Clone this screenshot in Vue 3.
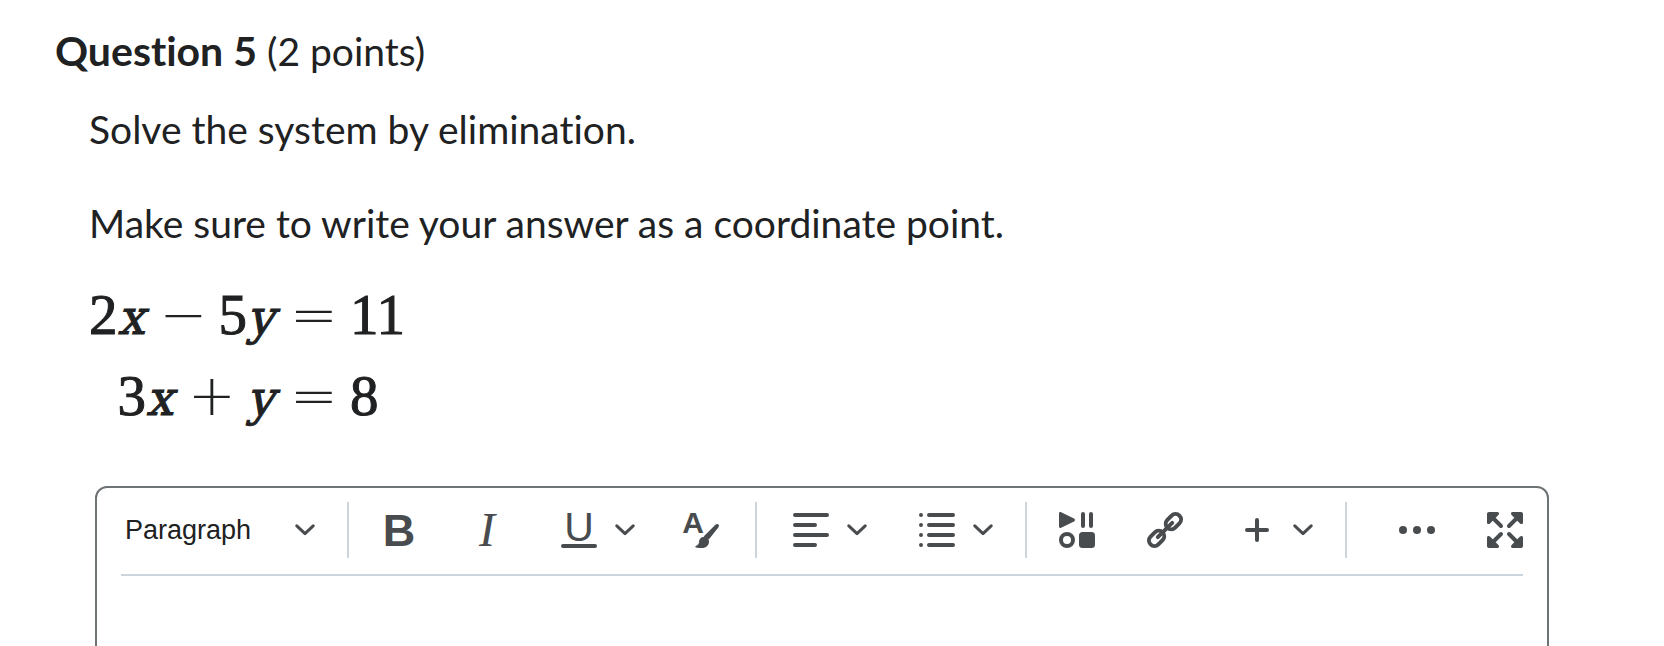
<script setup>
import { ref } from 'vue'

const format = ref('Paragraph')
const answer = ref('')

// right column of each row lines up on the equals sign
const equations = [
  { left: [['2', 'x'], ['−'], ['5', 'y']], right: '11' },
  { left: [['3', 'x'], ['+'], ['', 'y']], right: '8' }
]

const corners = [0, 90, 180, 270]
</script>

<template>
  <main class="page">
    <h2 class="title"><strong>Question 5</strong> (2 points)</h2>

    <section class="question">
      <p>Solve the system by elimination.</p>
      <p>Make sure to write your answer as a coordinate point.</p>

      <div class="system">
        <template v-for="(eq, i) in equations" :key="i">
          <div class="side">
            <span v-for="(term, j) in eq.left" :key="j" :class="term.length === 1 ? 'operator' : 'term'">{{ term[0] }}<i v-if="term[1]">{{ term[1] }}</i></span>
          </div>
          <span class="operator">=</span>
          <span class="term">{{ eq.right }}</span>
        </template>
      </div>
    </section>

    <section class="editor">
      <div class="toolbar" role="toolbar" aria-label="Formatting">
        <div class="format">
          <select v-model="format" aria-label="Format">
            <option>Paragraph</option>
            <option>Heading 1</option>
            <option>Heading 2</option>
          </select>
          <svg class="chevron" viewBox="0 0 20 12"><path d="M1.8 1.8L10 9.6L18.2 1.8" /></svg>
        </div>

        <div class="divider"></div>

        <div class="group">
          <button type="button" aria-label="Bold">
            <svg class="icon" viewBox="0 0 36 36"><text class="bold" x="18" y="34">B</text></svg>
          </button>
          <button type="button" aria-label="Italic">
            <svg class="icon" viewBox="0 0 36 36"><text class="italic" x="18" y="34">I</text></svg>
          </button>
          <button type="button" class="split" aria-label="Underline">
            <svg class="icon" viewBox="0 0 36 36">
              <text class="underline" x="18" y="29">U</text>
              <path class="line" d="M2 34H34" />
            </svg>
            <svg class="chevron" viewBox="0 0 20 12"><path d="M1.8 1.8L10 9.6L18.2 1.8" /></svg>
          </button>
          <button type="button" aria-label="Text color">
            <svg class="icon" viewBox="0 0 36 36">
              <text class="small" x="10" y="21">A</text>
              <path d="M32.4 12.7C33.4 11.8 34.8 11.8 35.5 12.6C36.2 13.4 36.1 14.4 35.5 15.3L25.8 27.6L20.6 24.6Z" />
              <path d="M16 30C16 27 18 25 20.6 25C23.6 25 26 27 26 29.5C26 33.4 23 36 19 36C16 36 12.8 36 12.3 34.8C12 33.6 16 33.4 16 30Z" />
            </svg>
          </button>
        </div>

        <div class="divider"></div>

        <div class="group">
          <button type="button" class="split" aria-label="Alignment">
            <svg class="icon" viewBox="0 0 36 36"><path class="line" d="M2 3H34M2 13H22M2 23H34M2 33H22" /></svg>
            <svg class="chevron" viewBox="0 0 20 12"><path d="M1.8 1.8L10 9.6L18.2 1.8" /></svg>
          </button>
          <button type="button" class="split" aria-label="List">
            <svg class="icon" viewBox="0 0 36 36"><path class="line" d="M2 3h0M2 13h0M2 23h0M2 33h0M10 3H34M10 13H34M10 23H34M10 33H34" /></svg>
            <svg class="chevron" viewBox="0 0 20 12"><path d="M1.8 1.8L10 9.6L18.2 1.8" /></svg>
          </button>
        </div>

        <div class="divider"></div>

        <div class="group">
          <button type="button" aria-label="Insert stuff">
            <svg class="icon" viewBox="0 0 36 36">
              <path d="M0 1.5C0 .3 1 -.3 2.2 .3L15 6.6C16.4 7.4 16.4 8.6 15 9.4L2.2 15.7C1 16.3 0 15.7 0 14.5Z" />
              <path class="line" d="M24 2V14M32 2V14" />
              <circle class="line" cx="8" cy="28" r="6" />
              <rect x="20" y="20" width="16" height="16" rx="3.5" />
            </svg>
          </button>
          <button type="button" aria-label="Insert link">
            <svg class="icon" viewBox="0 0 36 36">
              <rect class="line" x="17.9" y="4.1" width="17" height="11" rx="5.5" transform="rotate(-45 26.4 9.6)" />
              <rect class="line" x="1.1" y="20.9" width="17" height="11" rx="5.5" transform="rotate(-45 9.6 26.4)" />
              <path class="line" d="M25.2 10.8L10.8 25.2" />
            </svg>
          </button>
          <button type="button" class="split" aria-label="Other insert options">
            <svg class="icon" viewBox="0 0 36 36"><path class="line" d="M18 8V28M8 18H28" /></svg>
            <svg class="chevron" viewBox="0 0 20 12"><path d="M1.8 1.8L10 9.6L18.2 1.8" /></svg>
          </button>
        </div>

        <div class="divider"></div>

        <div class="group last">
          <button type="button" aria-label="More actions">
            <svg class="icon" viewBox="0 0 36 36">
              <circle cx="4" cy="18" r="4" />
              <circle cx="18" cy="18" r="4" />
              <circle cx="32" cy="18" r="4" />
            </svg>
          </button>
          <button type="button" class="fullscreen" aria-label="Full screen">
            <svg class="icon" viewBox="0 0 36 36">
              <g v-for="angle in corners" :key="angle" :transform="`rotate(${angle} 18 18)`">
                <path d="M2 0H10.4C12 0 12.6 1.6 11.4 3L3 11.4C1.6 12.6 0 12 0 10.4V2C0 .8 .8 0 2 0Z" />
                <path class="line" d="M6 6L14 14" />
              </g>
            </svg>
          </button>
        </div>
      </div>

      <textarea v-model="answer" aria-label="Answer"></textarea>
    </section>
  </main>
</template>

<style>
body {
  margin: 0;
  background: #fff;
}
</style>

<style scoped>
.page {
  box-sizing: border-box;
  height: 100vh;
  overflow: hidden;
  padding: 27px 115px 0 55px;
  color: #202122;
  font-family: Lato, "Liberation Sans", sans-serif;
  font-size: 39px;
  font-variant-ligatures: none;
}

.title {
  margin: 0 0 26px;
  font-size: 39px;
  font-weight: 400;
  line-height: 48px;
}

.title strong {
  font-size: 41px;
}

.question {
  padding-left: 34px;
}

.question p {
  margin: 0 0 38px;
  line-height: 56px;
}

.question p:last-of-type {
  margin-bottom: 23px;
}

.system {
  display: grid;
  grid-template-columns: max-content max-content max-content;
  grid-auto-rows: 81px;
  align-items: baseline;
  column-gap: 16px;
  font-family: "Liberation Serif", serif;
  font-size: 57px;
  line-height: 81px;
}

.side {
  display: flex;
  align-items: baseline;
  justify-content: flex-end;
  gap: 15px;
}

.term {
  -webkit-text-stroke: 1px #202122;
}

.term i {
  font-family: "DejaVu Math TeX Gyre", "Liberation Serif", serif;
  font-size: 48px;
  line-height: 1;
}

.operator {
  width: 44px;
  font-family: "DejaVu Sans Light", "DejaVu Sans", sans-serif;
  font-size: 57px;
  font-weight: 200;
  text-align: center;
}

.editor {
  box-sizing: border-box;
  margin: 50px 0 0 40px;
  padding: 0 24px;
  border: 2px solid #6e7376;
  border-radius: 12px;
}

.toolbar {
  display: flex;
  align-items: center;
  padding: 14px 0 16px;
  border-bottom: 2px solid #cdd5dc;
}

.format {
  display: grid;
  align-items: center;
  width: 214px;
  margin-right: 12px;
}

.format select,
.format svg {
  grid-area: 1 / 1;
}

.format svg {
  justify-self: end;
  margin-right: 20px;
  pointer-events: none;
}

.format select {
  appearance: none;
  width: 100%;
  height: 56px;
  padding: 0 4px;
  border: 0;
  background: transparent;
  color: #202122;
  font-family: "Liberation Sans", Arial, sans-serif;
  font-size: 27px;
}

.divider {
  width: 2px;
  height: 56px;
  background: #cdd5dc;
}

.group {
  display: flex;
  gap: 4px;
  margin: 0 12px 0 8px;
}

.group.last {
  margin: 0 0 0 auto;
}

button {
  display: flex;
  align-items: center;
  justify-content: center;
  width: 84px;
  height: 56px;
  padding: 0;
  border: 0;
  border-radius: 8px;
  background: transparent;
  cursor: pointer;
}

button:hover {
  background: #e3e9f1;
}

button.split {
  justify-content: flex-start;
  gap: 18px;
  width: 122px;
  padding-left: 28px;
}

button.fullscreen {
  justify-content: flex-end;
  width: 60px;
}

.icon {
  width: 36px;
  height: 36px;
  fill: #494c4e;
  overflow: visible;
}

.icon .line {
  fill: none;
  stroke: #494c4e;
  stroke-width: 4;
  stroke-linecap: round;
}

.icon text {
  font-family: "Liberation Sans", Arial, sans-serif;
  text-anchor: middle;
}

.icon .bold {
  font-size: 45px;
  font-weight: 700;
}

.icon .italic {
  font-family: "Liberation Serif", serif;
  font-size: 48px;
  font-style: italic;
}

.icon .underline {
  font-size: 41px;
}

.icon .small {
  font-size: 30px;
  font-weight: 700;
}

.chevron {
  width: 20px;
  height: 12px;
  fill: none;
  stroke: #494c4e;
  stroke-width: 3;
  stroke-linecap: round;
  stroke-linejoin: round;
}

textarea {
  display: block;
  box-sizing: border-box;
  width: 100%;
  height: 240px;
  padding: 20px 4px;
  border: 0;
  outline: 0;
  resize: none;
  background: transparent;
  font: inherit;
  color: inherit;
}
</style>
